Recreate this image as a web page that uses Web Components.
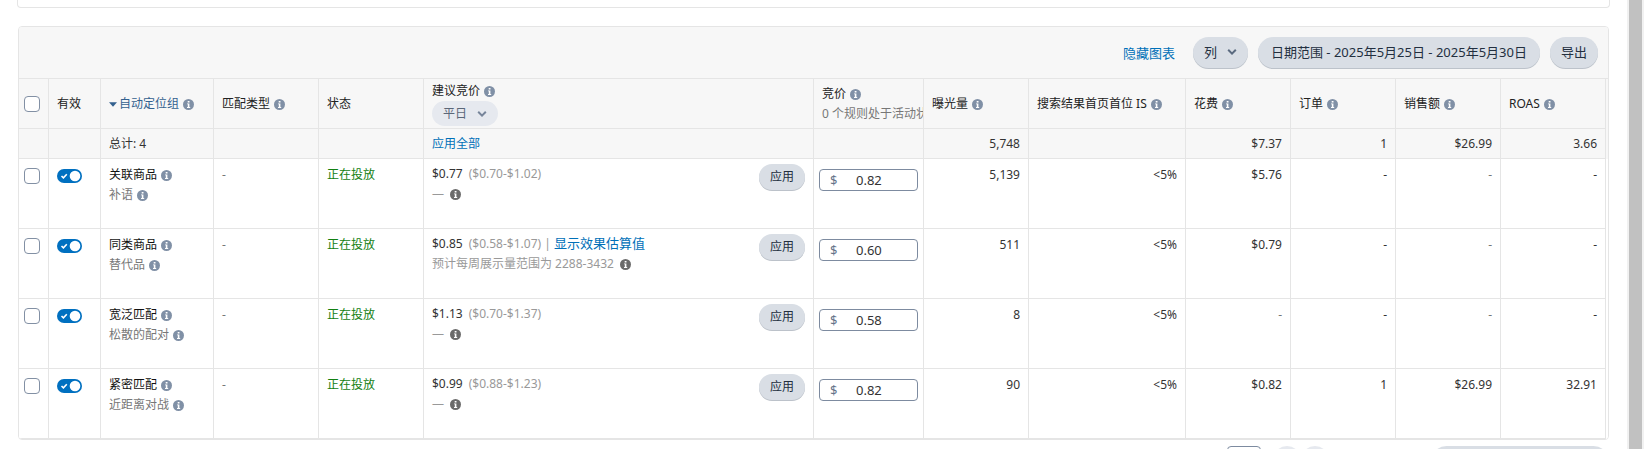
<!DOCTYPE html>
<html lang="zh-CN">
<head>
<meta charset="utf-8">
<title>自动定位组</title>
<style>
html,body{height:100%}
body{margin:0;overflow:hidden;background:#fff;color:#333;font:12px/20px "Noto Sans","Noto Sans CJK SC",sans-serif}
</style>
</head>
<body>
<ad-page></ad-page>
<script>
const define = (name, html, setup) => customElements.define(name, class extends HTMLElement {
  connectedCallback() {
    if (this.shadowRoot) return;
    this.attachShadow({mode: 'open'}).innerHTML = html;
    if (setup) setup(this, this.shadowRoot);
  }
});

define('info-icon', `<style>
:host{display:inline-block;vertical-align:middle;width:11px;height:11px;margin-left:1px;color:#8090a6}
:host([dark]){color:#6b6b6b}
svg{display:block}
</style>
<svg width="11" height="11" viewBox="0 0 11 11" aria-hidden="true"><circle cx="5.5" cy="5.5" r="5.5" fill="currentColor"/><path d="M4.7 2h1.8v1.4H4.7zM4 4.4h2.4v3.5h.8v1H4v-1h.8V5.3H4z" fill="#fff"/></svg>`);

define('chevron-icon', `<style>:host{display:block;width:10px;height:6px}svg{display:block}</style>
<svg width="10" height="6" viewBox="0 0 10 6" aria-hidden="true"><path d="M1.2.8 5 4.6 8.8.8" fill="none" stroke="currentColor" stroke-width="2"/></svg>`);

define('pill-button', `<style>
:host{display:inline-block}
button{display:flex;align-items:center;gap:10px;height:31px;padding:0 11px 2px;border:0;border-radius:16px;background:#d9dee5;color:#232f3f;font:13px/20px "Noto Sans","Noto Sans CJK SC",sans-serif;box-shadow:0 1px 0 #bcc2ca;white-space:nowrap}
:host([wide]) button{padding:0 13px 2px}
:host([small]) button{height:26px;font-size:12px;padding-bottom:0}
:host([soft]) button{height:25px;font-size:12px;padding-bottom:0;background:#e6e9ef;color:#5b6778;box-shadow:none}
chevron-icon{color:#5b6b80}
:host([soft]) chevron-icon{color:#77859a}
</style><button type="button"><slot></slot></button>`, (el, root) => {
  if (el.hasAttribute('menu')) root.querySelector('button').append(document.createElement('chevron-icon'));
});

define('tick-box', `<style>
:host{display:block;width:16px;height:16px}
input{appearance:none;display:block;box-sizing:border-box;width:16px;height:16px;margin:0;border:1px solid #8290a4;border-radius:4px;background:#fff}
</style><input type="checkbox">`, (el, root) => root.querySelector('input').setAttribute('aria-label', el.getAttribute('label')));

define('toggle-switch', `<style>
:host{display:block;width:25px;height:14px}
label{display:grid}
input,svg{grid-area:1/1}
input{appearance:none;width:25px;height:14px;margin:0;border-radius:7px;background:#0070c0}
svg{pointer-events:none;z-index:1}
</style><label><input type="checkbox" role="switch" checked aria-label="有效"><svg width="25" height="14" viewBox="0 0 25 14"><circle cx="18" cy="7" r="5.3" fill="#fff"/><path d="M4.5 7 6.4 8.9 9.8 5.3" fill="none" stroke="#fff" stroke-width="1.6"/></svg></label>`);

define('bid-input', `<style>
:host{display:block}
label{display:flex;align-items:center;box-sizing:border-box;height:22px;border:1px solid #7d8ba0;border-radius:4px;background:#fff;padding-left:10px}
span{width:26px;color:#66758a;flex:none;font-size:13px}
input{min-width:0;flex:1;width:0;height:18px;border:0;padding:0;margin:0;background:none;outline:0;color:#333;font:13px/18px "Noto Sans",sans-serif}
</style><label><span>$</span><input type="text" aria-label="竞价"></label>`, (el, root) => { root.querySelector('input').value = el.getAttribute('value'); });

define('suggested-bid', `<style>
:host{display:flex;justify-content:space-between;align-items:flex-start}
.range{color:#999;margin-left:6px}
.note{color:#999}
a{color:#0070b8;text-decoration:none;font-size:13px;line-height:18px}
info-icon{margin-left:6px}
</style><div><div><span class="price"></span><span class="range"></span></div><div class="note"><span></span><info-icon dark></info-icon></div></div><pill-button small>应用</pill-button>`, (el, root) => {
  root.querySelector('.price').textContent = el.getAttribute('price');
  const range = root.querySelector('.range');
  range.textContent = `(${el.getAttribute('range')})`;
  const note = el.getAttribute('note');
  root.querySelector('.note span').textContent = note || '—';
  if (note) range.insertAdjacentHTML('afterend', '<span class="note"> | </span><a href="#estimate">显示效果估算值</a>');
});

const rows = [
  ['关联商品','补语','$0.77','$0.70-$1.02','','0.82','5,139','$5.76','-','-','-'],
  ['同类商品','替代品','$0.85','$0.58-$1.07','预计每周展示量范围为 2288-3432','0.60','511','$0.79','-','-','-'],
  ['宽泛匹配','松散的配对','$1.13','$0.70-$1.37','','0.58','8','-','-','-','-'],
  ['紧密匹配','近距离对战','$0.99','$0.88-$1.23','','0.82','90','$0.82','1','$26.99','32.91'],
];
const rowHtml = ([name, sub, price, range, note, bid, views, spend, orders, sales, roas]) => `<tr>
<td class="tick"><tick-box label="${name}"></tick-box></td>
<td class="switch"><toggle-switch></toggle-switch></td>
<td><div class="dark">${name} <info-icon></info-icon></div><div class="muted">${sub} <info-icon></info-icon></div></td>
<td class="muted">-</td><td class="live">正在投放</td>
<td class="suggest"><suggested-bid price="${price}" range="${range}" note="${note}"></suggested-bid></td>
<td class="bid"><bid-input value="${bid}"></bid-input></td>
<td class="num">${views}</td><td class="num">&lt;5%</td><td class="num${spend === '-' ? ' muted' : ''}">${spend}</td>
<td class="num">${orders}</td><td class="num${sales === '-' ? ' muted' : ''}">${sales}</td><td class="num">${roas}</td></tr>`;
const head = t => `<th scope="col">${t} <info-icon></info-icon></th>`;

define('targeting-table', `<style>
:host{display:block;padding-right:2px;background:linear-gradient(#f7f7f7 80px,#fff 80px)}
table{width:100%;table-layout:fixed;border-collapse:separate;border-spacing:0}
th,td{box-sizing:border-box;border-right:1px solid #e5e5e5;border-bottom:1px solid #e5e5e5;padding:6px 8px 0;text-align:left;vertical-align:top;font-weight:400;white-space:nowrap;overflow:hidden}
thead th{height:50px;padding:0 8px;vertical-align:middle;background:#f7f7f7;color:#222}
.total td{height:30px;padding:0 8px;vertical-align:middle;background:#f7f7f7}
tbody tr:not(.total) td{height:70px}
thead .tick,tbody .tick{padding-left:5px;padding-right:0}
tbody tr:not(.total) .tick{padding-top:9px}
tbody .switch{padding-top:10px}
tbody .suggest{padding-top:5px}
tbody .bid{padding:10px 5px 0}
tbody .num{text-align:right}
thead .bid{padding-right:0}
.dark{color:#111}.muted{color:#777}.live{color:#128012}
a{color:#0070b8;text-decoration:none}
.sort{color:#33618f}
.sort svg{margin-right:2px;vertical-align:middle}
pill-button{display:block}
.stack{display:flex;flex-direction:column;align-items:flex-start}
</style>
<table><colgroup>${[30,52,113,105,105,0,110,105,157,105,105,105,105].map(w => w ? `<col style="width:${w}px">` : '<col>').join('')}</colgroup>
<thead><tr><th class="tick"><tick-box label="全选"></tick-box></th><th scope="col">有效</th>
<th scope="col"><a class="sort" href="#sort"><svg width="8" height="5" viewBox="0 0 8 5"><path d="M0 .3h8L4 4.8z" fill="currentColor"/></svg>自动定位组</a> <info-icon></info-icon></th>
${head('匹配类型')}<th scope="col">状态</th>
<th scope="col"><div class="stack"><div>建议竞价 <info-icon></info-icon></div><pill-button soft menu>平日</pill-button></div></th>
<th scope="col" class="bid"><div>竞价 <info-icon></info-icon></div><div class="muted">0 个规则处于活动状态</div></th>
${['曝光量','搜索结果首页首位 IS','花费','订单','销售额','ROAS'].map(head).join('')}</tr></thead>
<tbody><tr class="total"><td></td><td></td><td>总计: 4</td><td></td><td></td><td><a href="#all">应用全部</a></td><td></td><td class="num">5,748</td><td></td><td class="num">$7.37</td><td class="num">1</td><td class="num">$26.99</td><td class="num">3.66</td></tr>
${rows.map(rowHtml).join('')}</tbody></table>`);

define('table-toolbar', `<style>
:host{display:flex;justify-content:flex-end;align-items:center;gap:10px;height:51px;padding-right:10px;background:#f7f7f7;border-bottom:1px solid #e5e5e5}
a{color:#0070b8;text-decoration:none;font-size:13px;margin-right:8px}
</style><a href="#chart">隐藏图表</a><pill-button menu>列</pill-button><pill-button wide>日期范围 - 2025年5月25日 - 2025年5月30日</pill-button><pill-button>导出</pill-button>`);

define('table-pager', `<style>
:host{display:flex;justify-content:flex-end;margin-top:6px;height:31px}
input{box-sizing:border-box;width:34px;height:31px;border:1px solid #7d8ba0;border-radius:4px;margin:0 12px 0 0;padding:0}
button{border:0;padding:0;height:31px;background:#e6e9ef}
.step{width:28px;border-radius:14px}
.size{width:178px;border-radius:16px;background:#d9dee5;margin-left:102px}
</style><input type="text" aria-label="页码"><button class="step" type="button" aria-label="上一页"></button><button class="step" type="button" aria-label="下一页"></button><button class="size" type="button" aria-label="每页结果数"></button>`);

define('ad-page', `<style>
:host{display:flex;height:100%;overflow:hidden}
main{flex:1;min-width:0;padding:0 18px}
.chart{height:7px;border:1px solid #e5e5e5;border-top:0;border-radius:0 0 4px 4px;margin:0 -1px 18px}
.card{border:1px solid #e5e5e5;border-radius:4px;overflow:hidden}
.bar{width:13px;padding:0 2px;background:#f1f1f1}
.bar div{height:100%;background:#c1c1c1}
</style>
<main><section class="chart"></section><section class="card"><table-toolbar></table-toolbar><targeting-table></targeting-table></section><table-pager></table-pager></main>
<div class="bar"><div></div></div>`);
</script>
</body>
</html>
